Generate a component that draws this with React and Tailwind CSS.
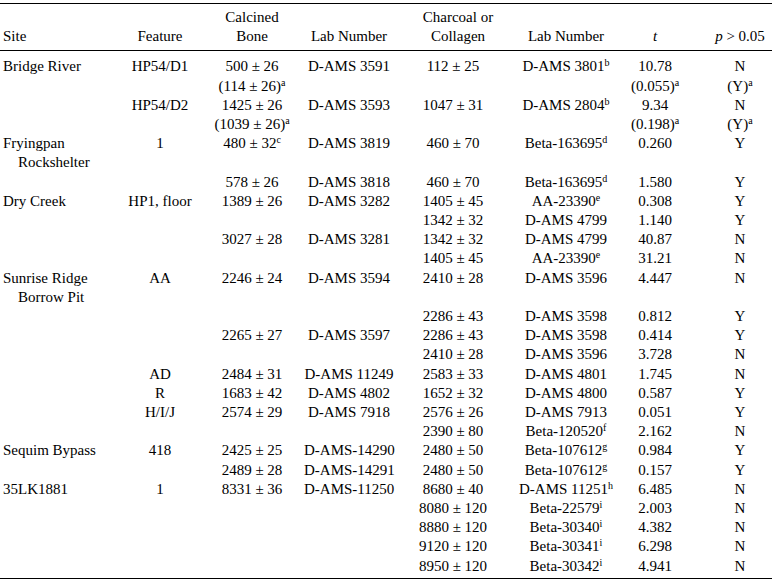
import React from "react";

const rows = [
  { site: ["Bridge River"], feat: "HP54/D1", bone: ["500 ± 26", ["(114 ± 26)", "a"]], lab: "D-AMS 3591", char: "112 ± 25", lab2: ["D-AMS 3801", "b"], t: ["10.78", ["(0.055)", "a"]], p: ["N", ["(Y)", "a"]] },
  { feat: "HP54/D2", bone: ["1425 ± 26", ["(1039 ± 26)", "a"]], lab: "D-AMS 3593", char: "1047 ± 31", lab2: ["D-AMS 2804", "b"], t: ["9.34", ["(0.198)", "a"]], p: ["N", ["(Y)", "a"]] },
  { site: ["Fryingpan", "Rockshelter"], feat: "1", bone: [["480 ± 32", "c"]], lab: "D-AMS 3819", char: "460 ± 70", lab2: ["Beta-163695", "d"], t: ["0.260"], p: ["Y"] },
  { bone: ["578 ± 26"], lab: "D-AMS 3818", char: "460 ± 70", lab2: ["Beta-163695", "d"], t: ["1.580"], p: ["Y"] },
  { site: ["Dry Creek"], feat: "HP1, floor", bone: ["1389 ± 26"], lab: "D-AMS 3282", char: "1405 ± 45", lab2: ["AA-23390", "e"], t: ["0.308"], p: ["Y"] },
  { char: "1342 ± 32", lab2: ["D-AMS 4799"], t: ["1.140"], p: ["Y"] },
  { bone: ["3027 ± 28"], lab: "D-AMS 3281", char: "1342 ± 32", lab2: ["D-AMS 4799"], t: ["40.87"], p: ["N"] },
  { char: "1405 ± 45", lab2: ["AA-23390", "e"], t: ["31.21"], p: ["N"] },
  { site: ["Sunrise Ridge", "Borrow Pit"], feat: "AA", bone: ["2246 ± 24"], lab: "D-AMS 3594", char: "2410 ± 28", lab2: ["D-AMS 3596"], t: ["4.447"], p: ["N"] },
  { char: "2286 ± 43", lab2: ["D-AMS 3598"], t: ["0.812"], p: ["Y"] },
  { bone: ["2265 ± 27"], lab: "D-AMS 3597", char: "2286 ± 43", lab2: ["D-AMS 3598"], t: ["0.414"], p: ["Y"] },
  { char: "2410 ± 28", lab2: ["D-AMS 3596"], t: ["3.728"], p: ["N"] },
  { feat: "AD", bone: ["2484 ± 31"], lab: "D-AMS 11249", char: "2583 ± 33", lab2: ["D-AMS 4801"], t: ["1.745"], p: ["N"] },
  { feat: "R", bone: ["1683 ± 42"], lab: "D-AMS 4802", char: "1652 ± 32", lab2: ["D-AMS 4800"], t: ["0.587"], p: ["Y"] },
  { feat: "H/I/J", bone: ["2574 ± 29"], lab: "D-AMS 7918", char: "2576 ± 26", lab2: ["D-AMS 7913"], t: ["0.051"], p: ["Y"] },
  { char: "2390 ± 80", lab2: ["Beta-120520", "f"], t: ["2.162"], p: ["N"] },
  { site: ["Sequim Bypass"], feat: "418", bone: ["2425 ± 25"], lab: "D-AMS-14290", char: "2480 ± 50", lab2: ["Beta-107612", "g"], t: ["0.984"], p: ["Y"] },
  { bone: ["2489 ± 28"], lab: "D-AMS-14291", char: "2480 ± 50", lab2: ["Beta-107612", "g"], t: ["0.157"], p: ["Y"] },
  { site: ["35LK1881"], feat: "1", bone: ["8331 ± 36"], lab: "D-AMS-11250", char: "8680 ± 40", lab2: ["D-AMS 11251", "h"], t: ["6.485"], p: ["N"] },
  { char: "8080 ± 120", lab2: ["Beta-22579", "i"], t: ["2.003"], p: ["N"] },
  { char: "8880 ± 120", lab2: ["Beta-30340", "i"], t: ["4.382"], p: ["N"] },
  { char: "9120 ± 120", lab2: ["Beta-30341", "i"], t: ["6.298"], p: ["N"] },
  { char: "8950 ± 120", lab2: ["Beta-30342", "i"], t: ["4.941"], p: ["N"] },
];

// a line is either "text" or ["text", "sup"]
const Line = ({ v }) => {
  if (Array.isArray(v)) {
    return (
      <div>
        {v[0]}
        {v[1] && <sup className="text-[10px]">{v[1]}</sup>}
      </div>
    );
  }
  return <div>{v}</div>;
};

const Lines = ({ items }) => (items ? items.map((v, i) => <Line key={i} v={v} />) : null);

export default function App() {
  return (
    <div className="bg-white w-[772px] h-[587px] pt-[3px] text-black">
      <table className="w-[772px] table-fixed border-collapse text-[15px] leading-[19.2px] font-['Liberation_Serif']">
        <colgroup>
          <col className="w-[120px]" />
          <col className="w-[80px]" />
          <col className="w-[104px]" />
          <col className="w-[90px]" />
          <col className="w-[124px]" />
          <col className="w-[96px]" />
          <col className="w-[82px]" />
          <col className="w-[76px]" />
        </colgroup>
        <thead>
          <tr className="border-t border-b border-black align-bottom text-center">
            <th className="font-normal text-left pl-[3px] pt-[4px] pb-[4px]">Site</th>
            <th className="font-normal pb-[4px]">Feature</th>
            <th className="font-normal pt-[4px] pb-[4px]">
              <div>Calcined</div>
              <div>Bone</div>
            </th>
            <th className="font-normal pb-[4px]">Lab Number</th>
            <th className="font-normal pb-[4px] pl-[4px]">
              <div>Charcoal or</div>
              <div>Collagen</div>
            </th>
            <th className="font-normal pb-[4px]">Lab Number</th>
            <th className="font-normal pb-[4px]">
              <i>t</i>
            </th>
            <th className="font-normal pb-[4px] pl-[12px]">
              <i>p</i> &gt; 0.05
            </th>
          </tr>
        </thead>
        <tbody>
          {rows.map((r, i) => (
            <tr
              key={i}
              className={
                "align-top text-center" +
                (i === 0 ? " [&>td]:pt-[6px]" : "") +
                (i === rows.length - 1 ? " border-b border-black [&>td]:pb-[2px]" : "")
              }
            >
              <td className="text-left pl-[3px] whitespace-nowrap">
                {r.site && (
                  <>
                    <div>{r.site[0]}</div>
                    {r.site[1] && <div className="pl-[15px]">{r.site[1]}</div>}
                  </>
                )}
              </td>
              <td className="whitespace-nowrap">{r.feat}</td>
              <td className="whitespace-nowrap">
                <Lines items={r.bone} />
              </td>
              <td className="whitespace-nowrap">{r.lab}</td>
              <td className="whitespace-nowrap pr-[6px]">{r.char}</td>
              <td className="whitespace-nowrap">
                <Line v={r.lab2} />
              </td>
              <td className="whitespace-nowrap">
                <Lines items={r.t} />
              </td>
              <td className="whitespace-nowrap pl-[12px]">
                <Lines items={r.p} />
              </td>
            </tr>
          ))}
        </tbody>
      </table>
    </div>
  );
}
